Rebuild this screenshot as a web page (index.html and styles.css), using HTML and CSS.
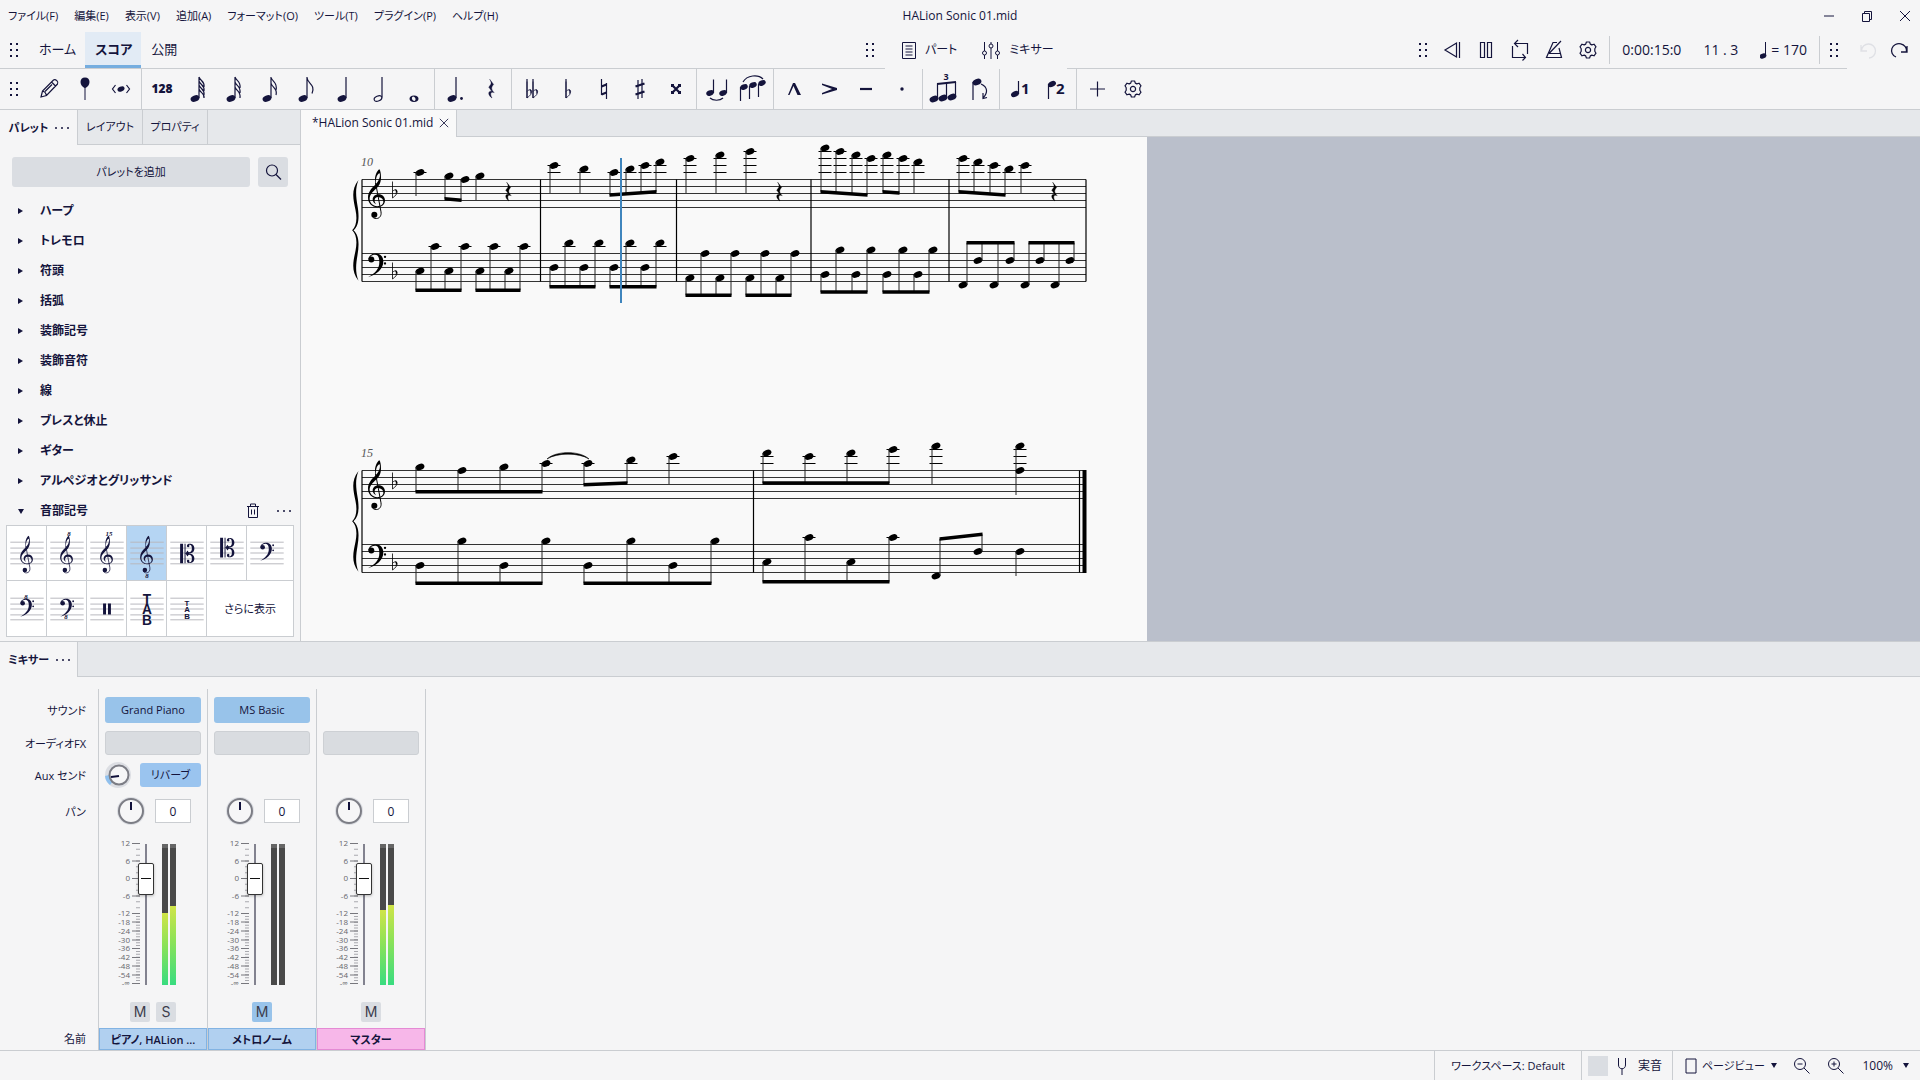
FILE: index.html
```html
<!DOCTYPE html>
<html lang="ja">
<head>
<meta charset="utf-8">
<title>HALion Sonic 01.mid</title>
<link rel="stylesheet" href="styles.css">
</head>
<body>
<svg class="defs" aria-hidden="true">
  <defs>
    <symbol id="treble" overflow="visible">
      <path fill-rule="evenodd" d="M22 47C8 60 0 70 0 86C0 102 12 114 27 114C40 114 51 107 51 94C51 83 43 75 32 75C20 75 14 83 14 90C14 97 18 102 24 105C19 99 19 93 21 89C23 85 28 83 33 84C41 85 46 90 46 98C46 106 38 111 28 111C14 111 5 101 5 89C5 76 15 68 24 59C34 49 39 41 39 24C39 12 37 3 34 0C28 4 21 16 21 30C21 36 22 42 22 47ZM24 44C22 28 28 12 35 12C38 22 32 36 24 44Z"/>
      <path d="M23 42L39 128C41 140 34 148 25 148C20 148 14 146 12 140" fill="none" stroke="currentColor" stroke-width="3"/>
      <circle cx="19" cy="137" r="9"/>
    </symbol>
    <symbol id="bass" overflow="visible">
      <circle cx="10" cy="18" r="9"/>
      <path d="M1 18C2 6 12 0 24 0C38 0 46 10 46 24C46 46 26 64 0 71C20 60 34 46 34 26C34 12 30 4 21 4C13 4 8 8 6 12Z"/>
      <circle cx="51" cy="10" r="3.5"/><circle cx="51" cy="30" r="3.5"/>
    </symbol>
    <symbol id="cclef" overflow="visible">
      <path d="M0 0h3v20h-3zM4.500 0h1v20h-1zM5.500 10l2-3 1 1.500C9 9 12 9 12 5C12 1 10 .8 8.800 1.200a1.300 1.300 0 1 1-1.800.6C7-.5 14.500-1 14.500 4.800C14.500 9 11 10 9.500 9.700V10.300C11 10 14.500 11 14.500 15.200C14.500 21 7 20.500 7 18.200a1.300 1.300 0 1 1 1.800.6C10 19.200 12 19 12 15C12 11 9 11 8.500 11.500l-1 1.500z"/>
    </symbol>
    <symbol id="head" overflow="visible"><ellipse rx="4.600" ry="3.100" transform="rotate(-24)"/></symbol>
    <symbol id="flat" overflow="visible">
      <path d="M0-11.500V5C3.500 2.500 4.600.7 4.600-1.200C4.600-3.500 2-4 0-1.500" fill="none" stroke="currentColor" stroke-width=".8"/>
      <path d="M2.500-3.300C4.600-4 5.800-1.500 3 1.500C3.600-.5 3.600-2.200 2.500-3.300Z"/>
    </symbol>
    <symbol id="rest" overflow="visible">
      <path d="M-1.300-9.700L2.600-4.600C0-1.500 0 0 3.200 3.700C0 2.400-1.500 4.500 1 9C-3.500 6-3 1.500.7 2.300L-2.300-2C.7-4.600.7-6.500-1.300-9.700Z" stroke="currentColor" stroke-width=".4"/>
    </symbol>
    <symbol id="staff" overflow="visible"><path d="M3 16.500h34M3 22.500h34M3 27.500h34M3 33.500h34M3 38.500h34" fill="none" stroke="#b8b8be"/></symbol>
    <symbol id="gear" overflow="visible">
      <path d="M-1.600-8h3.200l.7 2.100 1.500.8 2.200-.7 2 2.600-1.200 2 0 2.400 1.200 2-2 2.600-2.200-.7-1.500.8L1.600 8h-3.200l-.7-2.100-1.500-.8-2.200.7-2-2.600 1.200-2 0-2.400-1.200-2 2-2.600 2.200.7 1.500-.8Z" fill="none" stroke="currentColor" stroke-width="1.200" stroke-linejoin="round"/>
      <circle r="2.600" fill="none" stroke="currentColor" stroke-width="1.200"/>
    </symbol>
    <symbol id="grip" viewBox="0 0 10 16"><path d="M1 1h2v2H1zM7 1h2v2H7zM1 7h2v2H1zM7 7h2v2H7zM1 13h2v2H1zM7 13h2v2H7z"/></symbol>
    <symbol id="dots" viewBox="0 0 16 4"><circle cx="2" cy="2" r="1"/><circle cx="8" cy="2" r="1"/><circle cx="14" cy="2" r="1"/></symbol>
    <symbol id="knob" viewBox="0 0 28 28">
      <circle cx="14" cy="14" r="14" fill="#dcdee3"/><circle cx="14" cy="14" r="12" fill="#f6f6f7" stroke="#7c7d85" stroke-width="2"/>
      <path d="M14 5v8" stroke="#10103a" stroke-width="2"/>
    </symbol>
    <symbol id="scale" overflow="visible">
      <path d="M20 15v70" stroke="#a9a9ae" stroke-width="4" stroke-dasharray="1 4.833"/>
      <path d="M20 85v70" stroke="#a9a9ae" stroke-width="4" stroke-dasharray="1 1.917"/>
      <path d="M14 15.500h8M14 33h8M14 50.500h8M14 68h8M14 85.500h8M14 94h8M14 103h8M14 112h8M14 120.500h8M14 129.500h8M14 138h8M14 147h8M14 155.500h8" stroke="#77777d"/>
      <g text-anchor="end">
        <text x="12" y="18">12</text><text x="12" y="36">6</text><text x="12" y="53">0</text><text x="12" y="71">-6</text>
        <text x="12" y="88">-12</text><text x="12" y="97">-18</text><text x="12" y="106">-24</text><text x="12" y="115">-30</text>
        <text x="12" y="123">-36</text><text x="12" y="132">-42</text><text x="12" y="141">-48</text><text x="12" y="150">-54</text><text x="12" y="158">-∞</text>
      </g>
    </symbol>
  </defs>
</svg>

<header class="titlebar">
  <nav class="menu">
    <button>ファイル(F)</button><button>編集(E)</button><button>表示(V)</button><button>追加(A)</button><button>フォーマット(O)</button><button>ツール(T)</button><button>プラグイン(P)</button><button>ヘルプ(H)</button>
  </nav>
  <h1 class="title">HALion Sonic 01.mid</h1>
  <div class="window-controls">
    <button aria-label="最小化"><svg viewBox="0 0 12 12"><path d="M1 6h10"/></svg></button>
    <button aria-label="元に戻す"><svg viewBox="0 0 12 12"><path d="M1.500 3.500h7v8h-7zM3.500 3.500v-2h7v8h-2"/></svg></button>
    <button aria-label="閉じる"><svg viewBox="0 0 12 12"><path d="M1 1l10 10M11 1L1 11"/></svg></button>
  </div>
</header>

<div class="appbar">
  <div class="appbar-left">
    <svg class="grip"><use href="#grip"/></svg>
    <nav class="modes"><a href="#home">ホーム</a><a href="#score" class="current">スコア</a><a href="#publish">公開</a></nav>
    <svg class="grip grip-end"><use href="#grip"/></svg>
  </div>
  <div class="appbar-center">
    <button><svg viewBox="0 0 16 20"><path d="M1.500 2.500h13v16h-13zM4.500 6h7M4.500 9h7M4.500 12h7M4.500 15h7"/></svg>パート</button>
    <button><svg class="wide" viewBox="0 0 20 20"><path d="M3.500 2v9M3.500 15v4M10 2v2M10 8v11M16.500 2v9M16.500 15v4"/><circle cx="3.500" cy="13" r="2"/><circle cx="10" cy="6" r="2"/><circle cx="16.500" cy="13" r="2"/></svg>ミキサー</button>
  </div>
  <div class="appbar-right">
    <svg class="grip"><use href="#grip"/></svg>
    <div class="transport">
      <button aria-label="巻き戻し"><svg viewBox="0 0 34 36"><path d="M24.500 10v16M21.500 11v14L10 18Z"/></svg></button>
      <button aria-label="一時停止"><svg viewBox="0 0 34 36"><path d="M11.500 10.500h4v15h-4zM18.500 10.500h4v15h-4z"/></svg></button>
      <button aria-label="ループ"><svg viewBox="0 0 34 36"><path d="M12 11.500h12.500V22M22 25.500H9.500V14M15 8l-3.500 3.500 3.500 3.500M19.500 22l3 3.500-3 3"/></svg></button>
      <button aria-label="メトロノーム"><svg viewBox="0 0 34 36"><path d="M20 10.500h-4L9.500 25.500h15L22 16M12 21.500L24 9M12 21.500h11"/></svg></button>
      <button aria-label="再生設定"><svg viewBox="-17 -18 34 36"><use href="#gear"/></svg></button>
    </div>
    <div class="clock"><span>0:00:15:0</span><span>11 . 3</span><span class="tempo"><svg viewBox="0 0 8 18"><ellipse cx="3" cy="15" rx="3" ry="2" fill="currentColor" transform="rotate(-20 3 15)"/><path d="M5.500 15V1"/></svg>= 170</span></div>
    <svg class="grip grip-history"><use href="#grip"/></svg>
  </div>
  <div class="history">
    <button aria-label="元に戻す" disabled><svg viewBox="0 0 20 20"><path d="M2 4v6h6M2.500 9.500A7 7 0 1 1 10 17"/></svg></button>
    <button aria-label="やり直し"><svg viewBox="0 0 20 20"><path d="M18 5v6h-6M17.500 10.500A7.500 7 0 1 0 7 16"/></svg></button>
  </div>
</div>

<div class="toolbar">
  <svg class="grip"><use href="#grip"/></svg>
  <div class="tools">
    <button aria-label="音符入力"><svg viewBox="0 0 36 40"><path class="line" d="M10 28l1.500-6L22.500 11c2-1.500 5.500 2 4 4L15.500 26.500ZM20.500 13l4 4M11.500 22c2 .5 3.500 2 4 4.500M14 22.500l7-7"/></svg></button>
    <button aria-label="ピン"><svg viewBox="0 0 36 40"><path d="M18 8.500c-3 0-4.500 2-4.500 4.500 0 3 2 5 4 6v12h1V19c2-1 4-3 4-6 0-2.500-1.500-4.500-4.500-4.500Z"/></svg></button>
    <button aria-label="リピッチ"><svg viewBox="0 0 36 40"><path class="line" d="M12.500 16l-3 4 3 4M23.500 16l3 4-3 4"/><g transform="translate(18 20) scale(.8)"><use href="#head"/></g></svg></button>
  </div>
  <div class="tools">
    <button class="bold">128</button>
    <button aria-label="64分音符"><svg viewBox="0 0 36 40"><use href="#head" x="15" y="29.500"/><path class="line" d="M19 29V8M19 8c1 4 6 4 5 10M19 12c1 4 6 4 5 10M19 16c1 4 6 4 5 10M19 20c1 4 6 4 5 9"/></svg></button>
    <button aria-label="32分音符"><svg viewBox="0 0 36 40"><use href="#head" x="15" y="29.500"/><path class="line" d="M19 29V8M19 8c1 4 6 4 5 11M19 13c1 4 6 4 5 11M19 18c1 4 6 4 5 11"/></svg></button>
    <button aria-label="16分音符"><svg viewBox="0 0 36 40"><use href="#head" x="15" y="29.500"/><path class="line" d="M19 29V8M19 8c1 5 7 5 5 13M19 14c1 5 7 5 5 12"/></svg></button>
    <button aria-label="8分音符"><svg viewBox="0 0 36 40"><use href="#head" x="15" y="29.500"/><path class="line" d="M19 29V8M19 8.500c0 6 9 7 5 16"/></svg></button>
    <button aria-label="4分音符"><svg viewBox="0 0 36 40"><use href="#head" x="18" y="29.500"/><path class="line" d="M22 29V8"/></svg></button>
    <button aria-label="2分音符"><svg viewBox="0 0 36 40"><ellipse class="line" cx="18" cy="29.500" rx="4" ry="2.500" transform="rotate(-24 18 29.500)"/><path class="line" d="M22 28.500V8"/></svg></button>
    <button aria-label="全音符"><svg viewBox="0 0 36 40"><path fill-rule="evenodd" d="M18 26.500c3 0 4.500 1.500 4.500 3.200s-1.500 3.200-4.500 3.200-4.500-1.500-4.500-3.200 1.500-3.200 4.500-3.200ZM17 27.500c-2 .8-1 4.300 1.500 4.500 2-.8 1-4.300-1.500-4.500Z"/></svg></button>
  </div>
  <div class="tools">
    <button aria-label="付点"><svg viewBox="0 0 36 40"><use href="#head" x="15" y="29.500"/><path class="line" d="M19 29V8"/><circle cx="24.500" cy="29.500" r="1.400"/></svg></button>
    <button aria-label="休符"><svg viewBox="0 0 36 40"><use href="#rest" x="18" y="20"/></svg></button>
  </div>
  <div class="tools">
    <button aria-label="ダブルフラット"><svg viewBox="0 0 36 40"><use href="#flat" x="13" y="24"/><use href="#flat" x="19" y="24"/><path class="line" d="M13 10v19M19 10v19"/></svg></button>
    <button aria-label="フラット"><svg viewBox="0 0 36 40"><use href="#flat" x="16" y="24"/><path class="line" d="M16 10v19"/></svg></button>
    <button aria-label="ナチュラル"><svg viewBox="0 0 36 40"><path class="line" d="M15.500 10v16M20.500 14v16"/><path class="thick" d="M15.500 17.500l5-2M15.500 25.500l5-2"/></svg></button>
    <button aria-label="シャープ"><svg viewBox="0 0 36 40"><path class="line" d="M16 11v19M20 10v19"/><path class="thick" d="M13.500 17.500l9-3M13.500 25.500l9-3"/></svg></button>
    <button aria-label="ダブルシャープ"><svg viewBox="0 0 36 40"><path class="thick" d="M14.500 16.500l7 7M21.500 16.500l-7 7"/><path d="M13 15h3v3h-3zM20 15h3v3h-3zM13 22h3v3h-3zM20 22h3v3h-3z"/></svg></button>
  </div>
  <div class="tools">
    <button aria-label="タイ"><svg viewBox="0 0 36 40"><g transform="translate(11 24) scale(.85)"><use href="#head"/></g><g transform="translate(24 24) scale(.85)"><use href="#head"/></g><path class="line" d="M14.500 24V10.500M27.500 24V10.500M11 29c3 3 10 3 13 0"/></svg></button>
    <button aria-label="スラー"><svg viewBox="0 0 36 40"><g transform="translate(9 18) scale(.85)"><use href="#head"/></g><g transform="translate(18 16) scale(.85)"><use href="#head"/></g><g transform="translate(27 14) scale(.85)"><use href="#head"/></g><path class="line" d="M5.500 18v14M14.500 17v13M23.500 15v13M8 13c4-7 15-8 20-3"/></svg></button>
  </div>
  <div class="tools">
    <button aria-label="マルカート"><svg viewBox="0 0 36 40"><path d="M12 26l5-12h2l6 12h-3.500L17.500 17 13.500 26z"/></svg></button>
    <button aria-label="アクセント"><svg viewBox="0 0 36 40"><path d="M10 14.500L25 19v2L10 25.500v-1.500L20 20 10 16z"/></svg></button>
    <button aria-label="テヌート"><svg viewBox="0 0 36 40"><path class="thick" d="M12 20h12"/></svg></button>
    <button aria-label="スタッカート"><svg viewBox="0 0 36 40"><circle cx="18" cy="20" r="1.700"/></svg></button>
  </div>
  <div class="tools">
    <button aria-label="連符"><svg viewBox="0 0 36 40"><use href="#head" x="9" y="30"/><use href="#head" x="18" y="29"/><use href="#head" x="27" y="28"/><path class="line" d="M12.500 30V15M21.500 29V14M30.500 28V13"/><path class="thick" d="M12 15l19-2"/><text x="21" y="11" class="tuplet">3</text></svg></button>
    <button aria-label="反転"><svg viewBox="0 0 36 40"><use href="#head" x="16" y="13"/><path class="line" d="M12 13v18M20 15c7 3 7 9 2 14M22 24v5.500l4-1"/></svg></button>
  </div>
  <div class="tools">
    <button aria-label="声部1" class="voice"><svg viewBox="0 0 36 40"><g transform="translate(13 25) scale(.9)"><use href="#head"/></g><path class="line" d="M16.500 25V12"/><text x="19" y="25">1</text></svg></button>
    <button aria-label="声部2" class="voice"><svg viewBox="0 0 36 40"><g transform="translate(14 15) scale(.9)"><use href="#head"/></g><path class="line" d="M10.500 15v15"/><text x="18" y="25">2</text></svg></button>
  </div>
  <div class="tools last">
    <button aria-label="追加"><svg viewBox="0 0 36 40"><path class="line" d="M11 20h15M18.500 12.500v15"/></svg></button>
    <button aria-label="ツールバー設定"><svg viewBox="-18 -20 36 40"><use href="#gear"/></svg></button>
  </div>
</div>

<main class="workspace">
  <aside class="side">
    <div class="tabs">
      <button class="tab active">パレット<svg class="dots"><use href="#dots"/></svg></button><button class="tab">レイアウト</button><button class="tab">プロパティ</button>
    </div>
    <div class="palette-actions">
      <button class="fill add">パレットを追加</button>
      <button class="fill search" aria-label="検索"><svg viewBox="0 0 30 30"><circle cx="14" cy="13.500" r="5.500"/><path d="M18 17.500l5 5"/></svg></button>
    </div>
    <ul class="tree">
      <li><button>ハープ</button></li><li><button>トレモロ</button></li><li><button>符頭</button></li><li><button>括弧</button></li><li><button>装飾記号</button></li><li><button>装飾音符</button></li><li><button>線</button></li><li><button>ブレスと休止</button></li><li><button>ギター</button></li><li><button>アルペジオとグリッサンド</button></li>
      <li class="open"><button>音部記号</button>
        <svg class="trash" viewBox="0 0 14 16"><path d="M1 3.500h12M4.500 3V1h5v2M2.500 3.500v11h9v-11M5.500 6.500v5M8.500 6.500v5"/></svg><svg class="dots"><use href="#dots"/></svg></li>
    </ul>
    <div class="clefs">
      <button aria-label="ト音記号"><svg viewBox="0 0 40 55"><use href="#staff"/><g transform="translate(13 10) scale(.255)"><use href="#treble"/></g></svg></button>
      <button aria-label="ト音記号 8va"><svg viewBox="0 0 40 55"><use href="#staff"/><g transform="translate(13 10) scale(.255)"><use href="#treble"/></g><text x="22" y="10">8</text></svg></button>
      <button aria-label="ト音記号 15ma"><svg viewBox="0 0 40 55"><use href="#staff"/><g transform="translate(13 10) scale(.255)"><use href="#treble"/></g><text x="22" y="10">15</text></svg></button>
      <button aria-label="ト音記号 8vb" class="selected"><svg viewBox="0 0 40 55"><use href="#staff"/><g transform="translate(13 10) scale(.255)"><use href="#treble"/></g><text x="20" y="53">8</text></svg></button>
      <button aria-label="アルト記号"><svg viewBox="0 0 40 55"><use href="#staff"/><use href="#cclef" x="13" y="18"/></svg></button>
      <button aria-label="テノール記号"><svg viewBox="0 0 40 55"><use href="#staff"/><use href="#cclef" x="13" y="12"/></svg></button>
      <button aria-label="ヘ音記号"><svg viewBox="0 0 40 55"><use href="#staff"/><g transform="translate(13 17) scale(.26)"><use href="#bass"/></g></svg></button>
      <button aria-label="ヘ音記号 8va"><svg viewBox="0 0 40 55"><use href="#staff"/><g transform="translate(13 17) scale(.26)"><use href="#bass"/></g><text x="19" y="17">8</text></svg></button>
      <button aria-label="ヘ音記号 8vb"><svg viewBox="0 0 40 55"><use href="#staff"/><g transform="translate(13 17) scale(.26)"><use href="#bass"/></g><text x="19" y="38">8</text></svg></button>
      <button aria-label="打楽器"><svg viewBox="0 0 40 55"><use href="#staff"/><path d="M16 22h3v11h-3zM21 22h3v11h-3z"/></svg></button>
      <button aria-label="タブ譜"><svg viewBox="0 0 40 55"><use href="#staff"/><g class="tab-l"><text x="20" y="22">T</text><text x="20" y="33">A</text><text x="20" y="44">B</text></g></svg></button>
      <button aria-label="タブ譜 小"><svg viewBox="0 0 40 55"><use href="#staff"/><g class="tab-s"><text x="20" y="24">T</text><text x="20" y="31">A</text><text x="20" y="38">B</text></g></svg></button>
      <button class="more">さらに表示</button>
    </div>
  </aside>

  <section class="document">
    <div class="doc-tabs"><button class="doc-tab">*HALion Sonic 01.mid<svg viewBox="0 0 12 12"><path d="M1 1l10 10M11 1L1 11"/></svg></button></div>
    <div class="canvas"><svg id="sheet" class="sheet" viewBox="301 137 846 504"></svg></div>
  </section>
</main>

<section class="mixer">
  <div class="tabs"><button class="tab active">ミキサー<svg class="dots"><use href="#dots"/></svg></button></div>
  <div class="strips">
    <div class="strip labels"><span>サウンド</span><span>オーディオFX</span><span>Aux センド</span><span>パン</span><span></span><span></span><span>名前</span></div>

    <div class="strip">
      <button class="sound">Grand Piano</button>
      <button class="fx" aria-label="オーディオFX"></button>
      <div class="aux"><svg class="aux-knob" viewBox="0 0 26 26"><circle cx="13" cy="13" r="13" fill="#dcdee3"/><path d="M0 14A13 13 0 0 0 5 23L9 18 4 13Z" fill="#8fc0ee"/><circle cx="14" cy="13" r="9.500" fill="#f6f6f7" stroke="#7c7d85" stroke-width="2"/><path d="M14 14l-8 1" stroke="#10103a" stroke-width="2"/></svg><button class="reverb">リバーブ</button></div>
      <div class="pan"><svg class="knob"><use href="#knob"/></svg><input type="text" value="0" aria-label="ピアノ パン"></div>
      <div class="fader"><svg class="scale"><use href="#scale"/></svg><input type="range" max="1000" value="752" aria-label="ピアノ 音量"><div class="meter"><i style="--level:72px"></i><i style="--level:79px"></i></div></div>
      <div class="switches"><button>M</button><button>S</button></div>
      <div class="name">ピアノ, HALion ...</div>
    </div>

    <div class="strip">
      <button class="sound">MS Basic</button>
      <button class="fx" aria-label="オーディオFX"></button>
      <div class="aux"></div>
      <div class="pan"><svg class="knob"><use href="#knob"/></svg><input type="text" value="0" aria-label="メトロノーム パン"></div>
      <div class="fader"><svg class="scale"><use href="#scale"/></svg><input type="range" max="1000" value="752" aria-label="メトロノーム 音量"><div class="meter"><i style="--level:0px"></i><i style="--level:0px"></i></div></div>
      <div class="switches"><button class="on">M</button></div>
      <div class="name">メトロノーム</div>
    </div>

    <div class="strip master">
      <div></div>
      <button class="fx" aria-label="オーディオFX"></button>
      <div class="aux"></div>
      <div class="pan"><svg class="knob"><use href="#knob"/></svg><input type="text" value="0" aria-label="マスター パン"></div>
      <div class="fader"><svg class="scale"><use href="#scale"/></svg><input type="range" max="1000" value="752" aria-label="マスター 音量"><div class="meter"><i style="--level:75px"></i><i style="--level:80px"></i></div></div>
      <div class="switches"><button>M</button></div>
      <div class="name pink">マスター</div>
    </div>
  </div>
</section>

<footer class="status">
  <button class="workspace-name">ワークスペース: Default</button>
  <button class="pitch"><span class="box"></span><svg viewBox="0 0 12 20"><path d="M2.500 2v7c0 5 7 5 7 0V2M6 13v6"/></svg>実音</button>
  <button class="view"><svg viewBox="0 0 12 16"><path d="M1 1h10v14H1z"/></svg>ページビュー<b class="caret"></b></button>
  <button class="zoom" aria-label="縮小"><svg viewBox="0 0 18 18"><circle cx="7" cy="7" r="5.500"/><path d="M11 11l5.500 5.500M4.500 7h5"/></svg></button>
  <button class="zoom" aria-label="拡大"><svg viewBox="0 0 18 18"><circle cx="7" cy="7" r="5.500"/><path d="M11 11l5.500 5.500M4.500 7h5M7 4.500v5"/></svg></button>
  <button class="percent">100%<b class="caret"></b></button>
</footer>
<script src="score.js"></script>
</body>
</html>
```
FILE: styles.css
```css
* { box-sizing: border-box; }
:root {
  --ink: #14143c;
  --bg: #f5f5f6;
  --tab: #e6e8eb;
  --line: #cacdd1;
  --fill: #dadde2;
  --blue: #98c3ea;
}
body {
  margin: 0;
  height: 100vh;
  min-height: 960px;
  display: flex;
  flex-direction: column;
  overflow: hidden;
  background: var(--bg);
  color: var(--ink);
  font: 12px/16px "Open Sans", "Noto Sans CJK JP", sans-serif;
  font-feature-settings: "palt";
}
button, input { font: inherit; font-feature-settings: inherit; color: inherit; }
button { margin: 0; padding: 0; border: 0; background: none; white-space: nowrap; }
svg { display: block; fill: currentColor; flex: none; }
.defs { position: absolute; width: 0; height: 0; }
.grip { width: 10px; height: 16px; }
.dots { width: 16px; height: 4px; }

/* title bar */
.titlebar { display: grid; grid-template-columns: 1fr auto 1fr; align-items: center; height: 32px; }
.menu { display: flex; gap: 16px; padding-left: 8px; font-size: 11px; }
.title { margin: 0; font-size: 12px; font-weight: 400; }
.window-controls { display: flex; justify-content: flex-end; gap: 26px; padding-right: 9px; }
.window-controls svg { width: 12px; height: 12px; fill: none; stroke: currentColor; }

/* application bar */
.appbar { display: grid; grid-template-columns: 885fr 182px 780fr 73px; height: 37px; font-size: 13px; }
.appbar-left, .appbar-right { display: flex; align-items: center; border-bottom: 1px solid var(--line); }
.appbar-left { padding: 0 10px 0 9px; }
.modes { display: flex; align-self: stretch; margin-left: 10px; }
.modes a { display: flex; align-items: center; padding: 0 9px 0 10px; color: inherit; text-decoration: none; border-bottom: 3px solid transparent; }
.modes .current { background: #e2ebf5; border-color: #75addf; font-weight: 600; }
.grip-end { margin-left: auto; }
.appbar-center { display: flex; align-items: center; gap: 24px; padding: 0 0 2px 16px; font-size: 12px; }
.appbar-center button { display: flex; align-items: center; gap: 8px; }
.appbar-center svg { width: 16px; height: 20px; fill: none; stroke: currentColor; }
.appbar-center .wide { width: 20px; }
.appbar-right { justify-content: flex-end; padding-right: 8px; }
.transport { display: flex; align-items: center; height: 28px; padding: 0 4px 0 7px; border-right: 1px solid var(--line); }
.transport svg { width: 34px; height: 36px; fill: none; stroke: currentColor; stroke-width: 1.2; }
.clock { display: flex; gap: 22px; padding: 0 12px 0 12px; border-right: 1px solid var(--line); line-height: 28px; font-size: 14px; }
.tempo { display: flex; align-items: center; gap: 3px; }
.tempo svg { width: 8px; height: 18px; stroke: currentColor; }
.grip-history { margin-left: 9px; }
.history { display: flex; align-items: center; gap: 10px; padding-left: 12px; }
.history svg { width: 20px; height: 20px; fill: none; stroke: currentColor; stroke-width: 1.3; }
.history button:disabled { color: #dfe0e5; }

/* note input toolbar */
.toolbar { display: flex; align-items: center; height: 41px; padding-left: 9px; border-bottom: 1px solid var(--line); }
.toolbar .grip { margin-right: 10px; }
.tools { display: flex; padding: 0 2px; border-right: 1px solid var(--line); }
.tools.last { border: 0; }
.tools button { width: 36px; height: 40px; }
.tools svg { width: 36px; height: 40px; }
.tools .line { fill: none; stroke: currentColor; stroke-width: 1.2; }
.tools .thick { fill: none; stroke: currentColor; stroke-width: 2.2; }
.tools .bold { font-weight: 800; font-size: 12px; }
.tools text { font: 700 15px "Open Sans", sans-serif; }
.tools .tuplet { font-size: 9px; text-anchor: middle; }

/* workspace */
.workspace { flex: 1; display: flex; min-height: 0; }
.side { width: 301px; border-right: 1px solid var(--line); flex: none; }
.tabs { display: flex; height: 35px; background: linear-gradient(var(--tab) 34px, var(--line) 34px); }
.tab { display: flex; align-items: center; justify-content: center; gap: 8px; width: 65px; height: 34px; border-right: 1px solid var(--line); font-size: 11px; }
.tab.active { width: 78px; height: 35px; gap: 6px; padding-left: 2px; background: var(--bg); font-weight: 600; }
.palette-actions { display: flex; gap: 8px; padding: 12px 12px 8px; }
.fill { height: 30px; border-radius: 3px; background: var(--fill); }
.add { flex: 1; font-size: 11px; }
.search { width: 30px; }
.search svg { width: 30px; height: 30px; fill: none; stroke: currentColor; stroke-width: 1.2; }
.tree { margin: 0; padding: 0; list-style: none; }
.tree li { display: flex; align-items: center; height: 30px; padding: 2px 8px 0 18px; }
.tree li::before { content: ""; border: solid transparent; border-width: 3px 0 3px 5px; border-left-color: var(--ink); margin-right: 17px; }
.tree .open::before { border-width: 5px 3px 0; border-color: var(--ink) transparent transparent; margin-right: 16px; }
.tree button { font-weight: 600; }
.trash { width: 14px; height: 16px; fill: none; stroke: currentColor; margin: 0 16px 0 auto; }
.clefs { display: grid; grid-template-columns: repeat(6, 40px) 1fr; margin: 0 6px 0 6px; border: 1px solid var(--line); background: #fff; }
.clefs button { height: 55px; border-right: 1px solid var(--line); }
.clefs button:nth-child(-n+7) { border-bottom: 1px solid var(--line); }
.clefs button:nth-child(7), .clefs .more { border-right: 0; }
.clefs .selected { background: #b5d5f3; }
.clefs .more { grid-column: span 2; font-size: 11px; }
.clefs svg { width: 40px; height: 54px; }
.clefs text { font: italic 700 7px "Liberation Serif", serif; text-anchor: middle; }
.clefs .tab-l text { font: 700 14px "Liberation Sans", sans-serif; }
.clefs .tab-s text { font: 700 8px "Liberation Sans", sans-serif; }

.document { flex: 1; min-width: 0; display: flex; flex-direction: column; }
.doc-tabs { display: flex; height: 27px; background: linear-gradient(var(--tab) 26px, var(--line) 26px); }
.doc-tab { display: flex; align-items: center; gap: 6px; height: 27px; padding: 0 7px 1px 11px; background: #f9f9f9; border-right: 1px solid var(--line); }
.doc-tab svg { width: 10px; height: 10px; stroke: currentColor; }
.canvas { flex: 1; min-height: 0; overflow: hidden; background: #babfcb; }
.sheet { width: 846px; height: 504px; background: #f9f9f9; color: #000; }
.sheet .staff-line { stroke: #333; }
.sheet .stem { stroke: #222; }
.sheet .ledger { stroke: #000; }
.sheet .bar { stroke: #000; }
.sheet text { font: italic 12px "Liberation Serif", serif; fill: #555; }
.sheet .cursor { fill: #3f85bd; }

/* mixer */
.mixer { border-top: 1px solid var(--line); font-size: 11px; }
.strips { display: flex; padding-top: 12px; }
.strip {
  display: grid;
  grid-template-rows: 34px 32px 32px 40px 166px 30px 23px;
  align-items: center;
  width: 109px;
  padding-top: 4px;
  border-left: 1px solid var(--line);
}
.strip.labels { width: 98px; padding-right: 12px; border: 0; text-align: right; }
.labels span { padding-top: 1px; }
.strip.master { width: 110px; border-right: 1px solid var(--line); }
.sound, .fx, .aux { margin: 0 6px; }
.sound { height: 26px; border-radius: 3px; background: var(--blue); }
.fx { height: 24px; border: 1px solid #cdd0d4; border-radius: 3px; background: #d9dce0; }
.aux { display: flex; align-items: center; justify-content: space-between; }
.aux-knob { width: 26px; height: 26px; }
.reverb { width: 61px; height: 24px; border-radius: 3px; background: #9ac4ef; }
.pan { display: flex; align-items: center; justify-content: center; gap: 10px; padding-left: 2px; font-size: 12px; }
.knob { width: 28px; height: 28px; }
.pan input { width: 36px; height: 24px; padding: 0; border: 1px solid var(--line); background: #fff; text-align: center; }
.fader { display: flex; align-items: center; height: 172px; padding-left: 19px; }
.scale { width: 20px; height: 172px; overflow: visible; color: #66666c; font-size: 8px; line-height: 8px; }
.fader input {
  appearance: none;
  writing-mode: vertical-lr;
  direction: rtl;
  width: 16px;
  height: 172px;
  margin: 0 8px 0 0;
  background: linear-gradient(#82828f, #82828f) center / 2px 141px no-repeat;
  position: relative;
}
.fader input::-webkit-slider-thumb {
  appearance: none;
  width: 16px;
  height: 32px;
  border: 1px solid #333;
  border-radius: 2px;
  background: linear-gradient(#111, #111) center / 10px 1px no-repeat, #fff;
  box-shadow: 0 1px 3px #0004;
}
.meter { display: flex; gap: 2px; height: 141px; }
.meter i { display: flex; align-items: flex-end; width: 6px; background: linear-gradient(#666 4px, #494949 4px); }
.meter i::after { content: ""; width: 6px; height: var(--level); background: linear-gradient(#d0e447, #8be258 45%, #38dc80); }
.switches { display: flex; justify-content: center; gap: 6px; }
.switches button { width: 20px; height: 20px; border-radius: 2px; background: var(--fill); font: 14px/20px Inter, sans-serif; color: #3c3c4c; }
.switches .on { background: var(--blue); }
.name { align-self: end; height: 22px; line-height: 21px; border: 1px solid #82b3e3; background: #b1d0f0; font-weight: 600; text-align: center; white-space: nowrap; }
.name.pink { border-color: #e48ad4; background: #f7b7e9; }

/* status bar */
.status { display: flex; justify-content: flex-end; align-items: center; height: 30px; flex: none; border-top: 1px solid var(--line); }
.status button { display: flex; align-items: center; height: 29px; }
.status svg { fill: none; stroke: currentColor; }
.status .workspace-name { width: 147px; justify-content: center; border-left: 1px solid var(--line); font-size: 11px; }
.status .pitch { width: 92px; padding-left: 6px; border: solid var(--line); border-width: 0 1px; }
.pitch .box { width: 20px; height: 20px; background: var(--fill); }
.pitch svg { width: 12px; height: 20px; margin: 0 10px 0 8px; }
.status .view { width: 112px; padding-left: 12px; font-size: 11px; }
.view svg { width: 12px; height: 16px; margin-right: 5px; }
.caret { width: 6px; border: solid transparent; border-width: 5px 3px 0; border-top-color: var(--ink); margin-left: 10px; }
.view .caret { margin: 0 8px 0 auto; }
.status .zoom { width: 34px; justify-content: center; }
.zoom svg { width: 18px; height: 18px; }
.status .percent { width: 67px; padding: 0 11px 0 0; justify-content: flex-end; }
```
FILE: score.js
```js
// Draws the two visible systems. Pitches are staff steps counted down from the top line.
const STEP = 3.5;
const out = [];
const line = (cls, x1, y1, x2, y2, w = 1) =>
  out.push(`<line class="${cls}" x1="${x1}" y1="${y1}" x2="${x2}" y2="${y2}" stroke-width="${w}"/>`);

function system(top, number, bars) {
  for (const t of [top, top + 74]) {
    for (let i = 0; i < 5; i++) line("staff-line", 362, t + i * 7, 1086, t + i * 7);
  }
  for (const x of bars) line("bar", x, top, x, top + 102, 1.2);
  const s = 1 / 3;
  out.push(`<text x="361" y="${top - 14}">${number}</text>`);
  out.push(`<g transform="translate(368 ${top - 10.3}) scale(${s})"><use href="#treble"/></g>`);
  out.push(`<g transform="translate(368 ${top + 74}) scale(${s})"><use href="#bass"/></g>`);
  out.push(`<use href="#flat" x="392.500" y="${top + 13.5}"/><use href="#flat" x="392.500" y="${top + 94.5}"/>`);
  out.push(`<g transform="translate(339.500 ${top - 49.5}) scale(${s})"><path d="M57 150C33 180 42 210 48 240C54 268 50 290 38 301C50 312 54 334 48 362C42 392 33 422 57 452C46 425 50 400 54 375C60 340 58 315 42 301C58 287 60 262 54 227C50 202 46 177 57 150Z"/></g>`);
}

// notes: [x, step] pairs; end1, end2: stem end at first and last note; up: stem direction
function group(top, notes, end1, end2 = end1, up = false) {
  const dx = up ? 4 : -4;
  const xa = notes[0][0] + dx, xb = notes[notes.length - 1][0] + dx;
  for (const [x, step] of notes) {
    const y = top + step * STEP;
    out.push(`<use href="#head" x="${x}" y="${y}"/>`);
    for (let l = -2; l >= step; l -= 2) line("ledger", x - 6.5, top + l * STEP, x + 6.5, top + l * STEP);
    const f = xb > xa ? (x + dx - xa) / (xb - xa) : 0;
    line("stem", x + dx, y, x + dx, end1 + (end2 - end1) * f);
  }
  if (notes.length > 1) {
    out.push(`<path d="M${xa - .5} ${end1 - 1.8}L${xb + .5} ${end2 - 1.8}V${end2 + 1.8}L${xa - .5} ${end1 + 1.8}Z"/>`);
  }
}
const rest = (x, y) => out.push(`<use href="#rest" x="${x}" y="${y}"/>`);

const A = 179.5, B = A + 74;
system(A, 10, [362, 540.5, 676.5, 811, 949, 1086]);
group(A, [[420, -2]], 196);
group(A, [[449, -1], [465, 0]], 198.7, 200.3);
group(A, [[480, -1]], 200);
rest(508, 192);
group(A, [[554, -4]], 193);
group(A, [[584, -3]], 193);
group(A, [[614, -2], [630, -3], [645, -4], [660, -5]], 195, 191.7);
group(A, [[690, -6]], 193);
group(A, [[720, -7]], 193);
group(A, [[750, -8]], 193);
rest(779, 192);
group(A, [[825, -9], [840, -8], [856, -7], [871, -6]], 191.7, 195);
group(A, [[887, -7], [903, -6]], 191.7, 193);
group(A, [[918, -5]], 193);
group(A, [[963, -6], [978, -5], [994, -4], [1009, -3]], 191.7, 195);
group(A, [[1025, -4]], 193);
rest(1054, 192);

group(B, [[420, 5], [435, -2], [449, 5], [465, -2]], 290.3);
group(B, [[480, 5], [494, -2], [509, 5], [524, -2]], 290.3);
group(B, [[554, 4], [569, -3], [584, 4], [599, -3]], 286.7);
group(B, [[614, 4], [630, -3], [645, 4], [660, -3]], 286.7);
group(B, [[690, 7], [705, 0], [720, 7], [735, 0]], 295.3);
group(B, [[750, 7], [765, 0], [780, 7], [795, 0]], 295.3);
group(B, [[825, 6], [840, -1], [856, 6], [871, -1]], 292);
group(B, [[887, 6], [903, -1], [918, 6], [933, -1]], 292);
group(B, [[963, 9], [978, 2], [994, 9], [1010, 2]], 242.7, 242.7, true);
group(B, [[1025, 9], [1040, 2], [1055, 9], [1070, 2]], 242.7, 242.7, true);

const C = 470.5, D = C + 74;
system(C, 15, [362, 753.5, 1079.5]);
out.push(`<rect x="1082.500" y="470" width="4" height="103"/>`);
group(C, [[420, -1], [462, 0], [504, -1], [546, -2]], 491.7);
group(C, [[588, -2], [631, -3]], 484.7, 483);
group(C, [[673, -4]], 484);
out.push(`<path d="M547 459C556 450.500 580 450.500 589 459C579 452.500 557 452.500 547 459Z" stroke="#000" stroke-width=".6"/>`);
group(C, [[767, -5], [809, -4], [851, -5], [893, -6]], 483);
group(C, [[936, -7]], 484);
group(C, [[1020, -7]], 495);
group(C, [[1020, 0]], 470.5);
group(D, [[420, 6], [462, -1], [504, 6], [546, -1]], 583.3);
group(D, [[588, 6], [631, -1], [673, 6], [715, -1]], 583.3);
group(D, [[767, 5], [809, -2], [851, 5], [893, -2]], 581.7);
group(D, [[936, 9], [978, 2]], 539, 534.3, true);
group(D, [[1020, 2]], 576);

out.push(`<rect class="cursor" x="620" y="158" width="2" height="145"/>`);
document.getElementById("sheet").innerHTML = out.join("");
```
